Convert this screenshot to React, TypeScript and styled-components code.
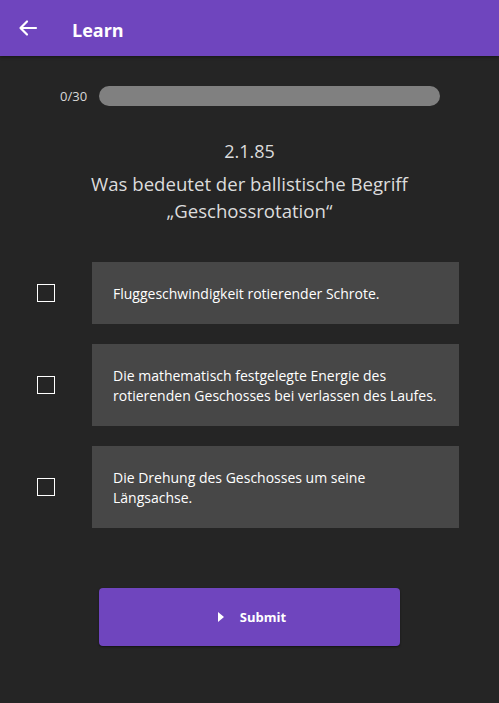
import React, { useState } from 'react';
import styled, { createGlobalStyle } from 'styled-components';

const GlobalStyle = createGlobalStyle`
    html, body {
        margin: 0;
        padding: 0;
        background-color: #252525;
    }
    body {
        font-family: "Open Sans", "Noto Sans", "Liberation Sans", sans-serif;
    }
`;

const Page = styled.div`
    width: 499px;
    height: 703px;
    background-color: #252525;
    display: flex;
    flex-direction: column;
`;

const AppBar = styled.header`
    height: 56px;
    background-color: #6f45be;
    display: flex;
    align-items: center;
    padding: 0 0 0 16px;
    gap: 32px;
    box-shadow: 0 1px 3px rgba(0, 0, 0, 0.4);
`;

const BackButton = styled.button`
    background: none;
    border: none;
    padding: 0;
    width: 24px;
    height: 24px;
    display: flex;
    align-items: center;
    justify-content: center;
    cursor: pointer;
`;

const Title = styled.h1`
    margin: 3px 0 0;
    color: #ffffff;
    font-size: 18px;
    font-weight: 700;
`;

const Content = styled.main`
    display: flex;
    flex-direction: column;
    align-items: center;
    padding-top: 30px;
`;

const ProgressRow = styled.div`
    display: flex;
    align-items: center;
    gap: 11px;
    width: 380px;
    margin-left: 1px;
`;

const ProgressLabel = styled.span`
    color: #d8d8d8;
    font-size: 13px;
    width: 28px;
`;

const Track = styled.div`
    flex: 1;
    height: 20px;
    border-radius: 10px;
    background-color: #808080;
    overflow: hidden;
`;

const Fill = styled.div`
    height: 100%;
    background-color: #6f45be;
`;

const Number = styled.div`
    margin-top: 33px;
    color: #dcdcdc;
    font-size: 18px;
    line-height: 24px;
`;

const Question = styled.h2`
    margin: 7px 0 0;
    color: #dcdcdc;
    font-size: 18.6px;
    font-weight: 400;
    line-height: 27px;
    text-align: center;
    width: 400px;
`;

const Options = styled.div`
    margin-top: 38px;
    display: flex;
    flex-direction: column;
    gap: 20px;
    width: 100%;
`;

const OptionRow = styled.label`
    display: flex;
    align-items: center;
    padding-left: 37px;
    cursor: pointer;
`;

const Box = styled.span<{ $checked: boolean }>`
    width: 16px;
    height: 16px;
    border: 1px solid #ffffff;
    background-color: ${(p) => (p.$checked ? '#6f45be' : 'transparent')};
    flex-shrink: 0;
`;

const Answer = styled.div<{ $tall: boolean }>`
    margin-left: 37px;
    width: 367px;
    height: ${(p) => (p.$tall ? 82 : 62)}px;
    box-sizing: border-box;
    padding: 2px 16px 0 21px;
    background-color: #474747;
    color: #ffffff;
    font-size: 14px;
    line-height: 20px;
    display: flex;
    align-items: center;
`;

const SubmitButton = styled.button`
    margin-top: 60px;
    width: 301px;
    height: 58px;
    border: none;
    border-radius: 4px;
    background-color: #6f45be;
    color: #ffffff;
    font-family: inherit;
    font-size: 13px;
    font-weight: 700;
    display: flex;
    align-items: center;
    justify-content: center;
    gap: 16px;
    padding: 0 0 0 5px;
    cursor: pointer;
    box-shadow: 0 1px 2px rgba(0, 0, 0, 0.5);
`;

const answers = [
    { text: 'Fluggeschwindigkeit rotierender Schrote.', tall: false },
    { text: 'Die mathematisch festgelegte Energie des rotierenden Geschosses bei verlassen des Laufes.', tall: true },
    { text: 'Die Drehung des Geschosses um seine Längsachse.', tall: true },
];

const App: React.FC = () => {
    const [checked, setChecked] = useState<boolean[]>([false, false, false]);

    const toggle = (i: number) => {
        setChecked((c) => c.map((v, j) => (j === i ? !v : v)));
    };

    return (
        <Page>
            <GlobalStyle />
            <AppBar>
                <BackButton aria-label="Back">
                    <svg width="20" height="20" viewBox="0 0 20 20" fill="none" stroke="#fff" strokeWidth="2.2" strokeLinecap="round" strokeLinejoin="round">
                        <path d="M18 10H3M9 3.5L2.5 10 9 16.5" />
                    </svg>
                </BackButton>
                <Title>Learn</Title>
            </AppBar>
            <Content>
                <ProgressRow>
                    <ProgressLabel>0/30</ProgressLabel>
                    <Track>
                        <Fill style={{ width: `${(0 / 30) * 100}%` }} />
                    </Track>
                </ProgressRow>
                <Number>2.1.85</Number>
                <Question>
                    Was bedeutet der ballistische Begriff
                    <br />
                    „Geschossrotation“
                </Question>
                <Options>
                    {answers.map((a, i) => (
                        <OptionRow key={i} onClick={() => toggle(i)}>
                            <Box $checked={checked[i]} />
                            <Answer $tall={a.tall}>{a.text}</Answer>
                        </OptionRow>
                    ))}
                </Options>
                <SubmitButton>
                    <svg width="6" height="10" viewBox="0 0 6 10">
                        <path d="M0 0L6 5 0 10Z" fill="#fff" />
                    </svg>
                    Submit
                </SubmitButton>
            </Content>
        </Page>
    );
};

export default App;
